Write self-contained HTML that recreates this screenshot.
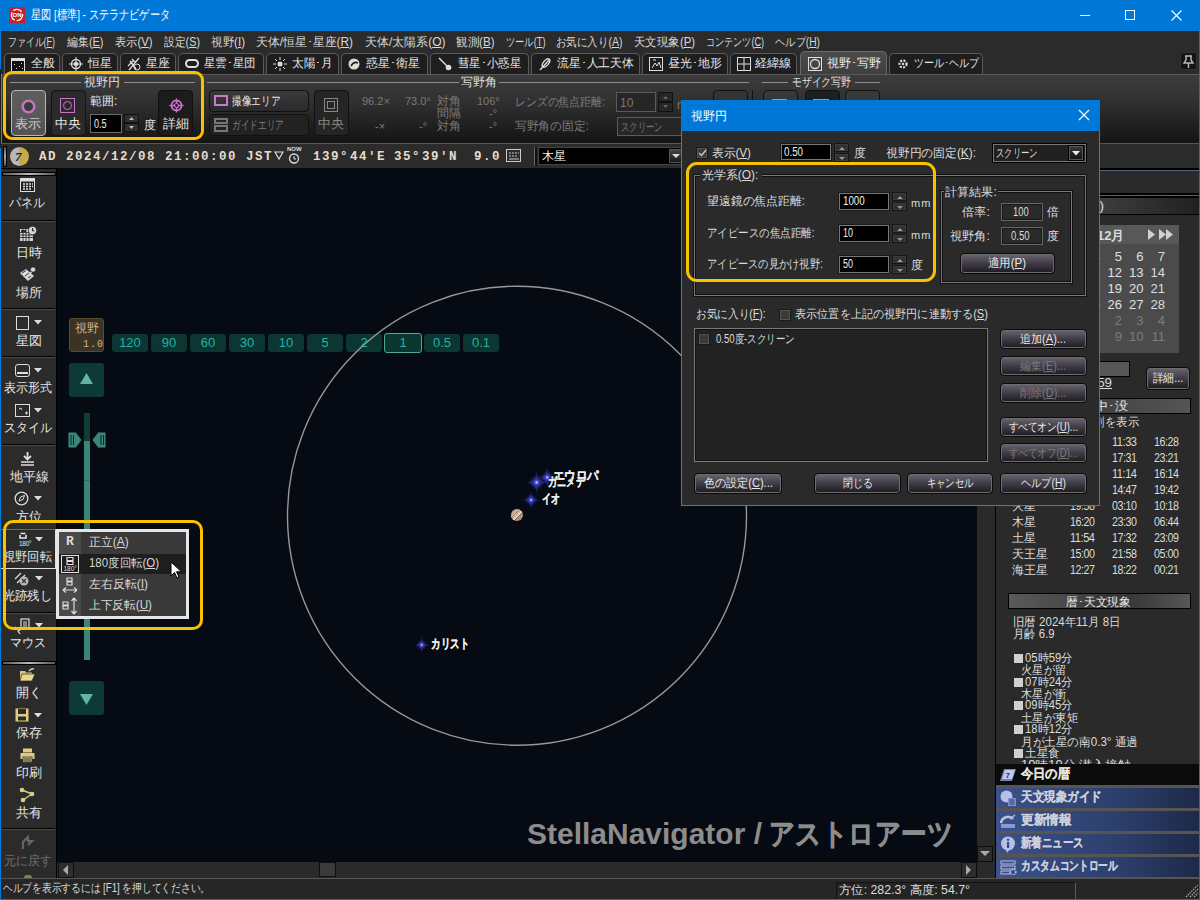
<!DOCTYPE html>
<html><head><meta charset="utf-8">
<style>
*{box-sizing:border-box;margin:0;padding:0}
html,body{width:1200px;height:900px;overflow:hidden;background:#2a2a2a;font-family:"Liberation Sans",sans-serif;font-size:12px;color:#d6d6d6}
.a{position:absolute}
.t{position:absolute;white-space:nowrap;line-height:1}
#title{left:0;top:0;width:1200px;height:31px;background:#0078d7}
#menu{left:1px;top:31px;width:1198px;height:22px;background:#2b2b2b}
#tabs{left:1px;top:53px;width:1198px;height:21px;background:#2b2b2b}
.tab{position:absolute;top:53px;height:21px;border:1px solid #5a5a5a;border-bottom:none;border-radius:5px 5px 0 0;background:#1e1e1e;color:#e0e0e0;font-size:12px;padding:4px 0 0 0}
#ribbon{left:1px;top:74px;width:1198px;height:70px;background:linear-gradient(#3c3c3c,#303030 40%,#141414);border-top:1px solid #5a5a5a;border-left:1px solid #777;border-bottom:1px solid #777;box-shadow:0 1px 0 #000}
#timebar{left:1px;top:143px;width:1198px;height:25px;background:#2b2b2b;border-top:1px solid #575757}
#side{left:1px;top:168px;width:56px;height:710px;background:#2b2b2b}
#map{left:57px;top:168px;width:920px;height:694px;background:#060a13}
#vscroll{left:977px;top:168px;width:17px;height:694px;background:#2a2a2a}
#hscroll{left:57px;top:862px;width:937px;height:16px;background:#2a2a2a}
#rpanel{left:995px;top:168px;width:204px;height:710px;background:#2a2a2a;border-left:1px solid #000}
#status{left:1px;top:878px;width:1198px;height:21px;background:#262626;border-top:1px solid #555}
#bl{left:0;top:0;width:1px;height:900px;background:#0078d7}
#br{left:1199px;top:0;width:1px;height:900px;background:#0078d7}
#bb{left:0;top:899px;width:1200px;height:1px;background:#0078d7}
.zb{position:absolute;top:334px;width:36px;height:18px;background:#0c3631;border-radius:3px;color:#23b3a3;font-size:13px;text-align:center;line-height:18px}
.dt{color:#dcdcdc;font-size:12px}
.cb{position:absolute;width:12px;height:12px;background:#3a3a3a;border:1px solid #1a1a1a;box-shadow:inset 0 0 0 1px #555}
.inp{position:absolute;background:#000;border:1px solid #1a1a1a;box-shadow:inset 0 0 0 1px #777}
.spin{position:absolute;width:15px;height:20px}
.spin i,.spin b{position:absolute;left:0;width:15px;height:9px;background:linear-gradient(#353535,#2a2a2a);border:1px solid #161616;box-shadow:inset 0 0 0 1px #3c3c3c}
.spin i{top:0}.spin b{top:10px}
.spin i::before{content:"";position:absolute;left:3.5px;top:2.5px;border-left:3.5px solid transparent;border-right:3.5px solid transparent;border-bottom:3px solid #9a9a9a}
.spin b::before{content:"";position:absolute;left:3.5px;top:2.5px;border-left:3.5px solid transparent;border-right:3.5px solid transparent;border-top:3px solid #9a9a9a}
.btn{position:absolute;display:flex;justify-content:center;background:linear-gradient(#6a6570,#403c46 50%,#1c1a20);border:1px solid #0a0a0a;box-shadow:inset 0 0 0 1px #6c6c6c;border-radius:4px;color:#e8e8e8;font-size:12px;text-align:center;line-height:19px;white-space:nowrap}
.btn.dis{color:#7a7a7a}
.btn span{display:inline-block;transform-origin:50% 0 !important}
</style></head><body>
<div class="a" id="title"></div>
<div class="a" id="menu"></div>
<div class="a" id="tabs"></div>
<div class="a" id="ribbon"></div>
<div class="a" id="timebar"></div>
<div class="a" id="side"></div><div class="a" style="left:56px;top:168px;width:1px;height:710px;background:#000"></div>
<div class="a" id="map"></div>
<div class="a" id="vscroll"></div>
<div class="a" id="hscroll"></div>
<div class="a" id="rpanel"></div>
<div class="a" id="status"></div>
<!-- TITLE -->
<div class="a" style="left:9px;top:7px;width:16px;height:16px;background:#c4202e"></div>
<svg class="a" style="left:9px;top:7px" width="16" height="16" viewBox="0 0 16 16"><circle cx="8" cy="8" r="5.6" fill="none" stroke="#fff" stroke-width="1.3" stroke-dasharray="9 2"/><text x="8" y="10.3" font-size="6" font-weight="bold" fill="#fff" text-anchor="middle" font-family="Liberation Sans">ON</text></svg>
<div class="t" style="left:31px;top:9px;color:#fff;font-size:12.5px;--w:139px;transform:scaleX(0.7830);transform-origin:0 0;">星図 [標準] - ステラナビゲータ</div>
<div class="a" style="left:1080px;top:15px;width:10px;height:1px;background:#fff"></div>
<div class="a" style="left:1125px;top:10px;width:10px;height:10px;border:1px solid #fff"></div>
<svg class="a" style="left:1171px;top:10px" width="11" height="11"><path d="M0.5 0.5L10.5 10.5M10.5 0.5L0.5 10.5" stroke="#fff" stroke-width="1.1"/></svg>
<!-- MENU -->
<div class="t" style="left:8px;top:36px;color:#d8d8d8;--w:47.0px;transform:scaleX(0.7420);transform-origin:0 0;">ファイル(<u>F</u>)</div>
<div class="t" style="left:66.5px;top:36px;color:#d8d8d8;--w:36.5px;transform:scaleX(0.9121);transform-origin:0 0;">編集(<u>E</u>)</div>
<div class="t" style="left:114.5px;top:36px;color:#d8d8d8;--w:37.5px;transform:scaleX(0.9371);transform-origin:0 0;">表示(<u>V</u>)</div>
<div class="t" style="left:164px;top:36px;color:#d8d8d8;--w:36.0px;transform:scaleX(0.8996);transform-origin:0 0;">設定(<u>S</u>)</div>
<div class="t" style="left:211px;top:36px;color:#d8d8d8;--w:34.0px;transform:scaleX(0.9620);transform-origin:0 0;">視野(<u>I</u>)</div>
<div class="t" style="left:256px;top:36px;color:#d8d8d8;--w:97.0px;transform:scaleX(0.9896);transform-origin:0 0;">天体/恒星･星座(<u>R</u>)</div>
<div class="t" style="left:364.5px;top:36px;color:#d8d8d8;--w:80.5px;transform:scaleX(0.9977);transform-origin:0 0;">天体/太陽系(<u>O</u>)</div>
<div class="t" style="left:456px;top:36px;color:#d8d8d8;--w:38.5px;transform:scaleX(0.9621);transform-origin:0 0;">観測(<u>B</u>)</div>
<div class="t" style="left:505.5px;top:36px;color:#d8d8d8;--w:39.5px;transform:scaleX(0.7693);transform-origin:0 0;">ツール(<u>T</u>)</div>
<div class="t" style="left:556px;top:36px;color:#d8d8d8;--w:66.5px;transform:scaleX(0.8748);transform-origin:0 0;">お気に入り(<u>A</u>)</div>
<div class="t" style="left:633.75px;top:36px;color:#d8d8d8;--w:61.2px;transform:scaleX(0.9560);transform-origin:0 0;">天文現象(<u>P</u>)</div>
<div class="t" style="left:706px;top:36px;color:#d8d8d8;--w:58.0px;transform:scaleX(0.7565);transform-origin:0 0;">コンテンツ(<u>C</u>)</div>
<div class="t" style="left:775px;top:36px;color:#d8d8d8;--w:45.0px;transform:scaleX(0.8543);transform-origin:0 0;">ヘルプ(<u>H</u>)</div>
<!-- TABS -->
<div class="tab" style="left:4px;width:56px"></div>
<div class="tab" style="left:62px;width:56px"></div>
<div class="tab" style="left:120px;width:56px"></div>
<div class="tab" style="left:178px;width:86px"></div>
<div class="tab" style="left:266px;width:73px"></div>
<div class="tab" style="left:341px;width:87px"></div>
<div class="tab" style="left:430px;width:99px"></div>
<div class="tab" style="left:531px;width:109px"></div>
<div class="tab" style="left:642px;width:86px"></div>
<div class="tab" style="left:730px;width:67px"></div>
<div class="tab" style="left:800px;width:87px;top:51px;height:23px;background:linear-gradient(#4c4c4c,#3e3e3e);border-color:#6a6a6a"></div>
<div class="tab" style="left:889px;width:94px"></div>

<svg class="a" style="left:11px;top:58px" width="14" height="14"><rect x="0.5" y="0.5" width="13" height="13" fill="#111" stroke="#ddd"/><rect x="0.5" y="0.5" width="13" height="2.5" fill="#ddd"/><rect x="3" y="6" width="1" height="1" fill="#ddd"/><rect x="8" y="8" width="1" height="1" fill="#ddd"/><rect x="5" y="10" width="1" height="1" fill="#ddd"/><rect x="10" y="5" width="1" height="1" fill="#ddd"/><rect x="11" y="10" width="1" height="1" fill="#ddd"/></svg>
<div class="t" style="left:31px;top:57px;color:#e6e6e6">全般</div>
<svg class="a" style="left:69px;top:57px" width="14" height="14"><circle cx="7" cy="7" r="4.5" fill="none" stroke="#ddd" stroke-width="1.3"/><path d="M7 0V14M0 7H14" stroke="#ddd"/><circle cx="7" cy="7" r="2.3" fill="#ddd"/></svg>
<div class="t" style="left:88px;top:57px;color:#e6e6e6">恒星</div>
<svg class="a" style="left:127px;top:57px" width="14" height="14"><path d="M2 13L12 1M3 4L9 12M1 9L6 4M5 2l3 3" stroke="#ddd" stroke-width="1.3" fill="none"/><circle cx="10" cy="10" r="3" fill="none" stroke="#ddd"/></svg>
<div class="t" style="left:146px;top:57px;color:#e6e6e6">星座</div>
<div class="a" style="left:185px;top:59px;width:14px;height:9px;border:2px solid #e0e0e0;border-radius:5px"></div>
<div class="t" style="left:204px;top:57px;color:#e6e6e6;--w:51.5px;transform:scaleX(0.9537);transform-origin:0 0;">星雲･星団</div>
<svg class="a" style="left:273px;top:57px" width="14" height="14"><circle cx="7" cy="7" r="2.5" fill="#ddd"/><path d="M7 0v3M7 11v3M0 7h3M11 7h3M2 2l2 2M10 10l2 2M12 2l-2 2M2 12l2-2" stroke="#ddd"/></svg>
<div class="t" style="left:292px;top:57px;color:#e6e6e6;--w:40.75px;transform:scaleX(0.9702);transform-origin:0 0;">太陽･月</div>
<svg class="a" style="left:348px;top:58px" width="12" height="12"><circle cx="6" cy="6" r="5.5" fill="#ddd"/><path d="M3 8Q6 3 10 5" stroke="#222" stroke-width="1.6" fill="none"/></svg>
<div class="t" style="left:366px;top:57px;color:#e6e6e6;--w:54px;transform:scaleX(1.0000);transform-origin:0 0;">惑星･衛星</div>
<svg class="a" style="left:438px;top:57px" width="14" height="14"><path d="M1 1L9 9" stroke="#ddd" stroke-width="1.4"/><circle cx="10.5" cy="10.5" r="2.8" fill="#ddd"/></svg>
<div class="t" style="left:458px;top:57px;color:#e6e6e6;--w:63px;transform:scaleX(0.9545);transform-origin:0 0;">彗星･小惑星</div>
<svg class="a" style="left:538px;top:57px" width="14" height="14"><path d="M2 13L12 2" stroke="#ddd" stroke-width="1.4"/><ellipse cx="8" cy="6" rx="2.5" ry="5" transform="rotate(40 8 6)" fill="none" stroke="#ddd" stroke-width="1.4"/></svg>
<div class="t" style="left:557px;top:57px;color:#e6e6e6;--w:77px;transform:scaleX(0.9872);transform-origin:0 0;">流星･人工天体</div>
<svg class="a" style="left:649px;top:57px" width="14" height="14"><rect x="0.5" y="0.5" width="13" height="13" fill="none" stroke="#ddd"/><path d="M3 11L6 6L8 9L10 5L12 11M4 3h3" stroke="#ddd" fill="none"/></svg>
<div class="t" style="left:668px;top:57px;color:#e6e6e6;--w:53.75px;transform:scaleX(0.9954);transform-origin:0 0;">昼光･地形</div>
<svg class="a" style="left:737px;top:57px" width="14" height="14"><rect x="0.5" y="0.5" width="13" height="13" fill="none" stroke="#ddd"/><path d="M7 0v14M0 7h14" stroke="#ddd"/></svg>
<div class="t" style="left:755px;top:57px;color:#e6e6e6;--w:36.75px;transform:scaleX(1.0208);transform-origin:0 0;">経緯線</div>
<svg class="a" style="left:808px;top:57px" width="14" height="14"><rect x="0.5" y="0.5" width="13" height="13" fill="none" stroke="#ddd"/><circle cx="7" cy="7" r="4.5" fill="none" stroke="#ddd" stroke-width="1.3"/></svg>
<div class="t" style="left:827px;top:57px;color:#eee;--w:54px;transform:scaleX(1.0000);transform-origin:0 0;">視野･写野</div>
<svg class="a" style="left:897px;top:58px" width="12" height="12"><circle cx="6" cy="6" r="3.5" fill="none" stroke="#ddd" stroke-width="2.2" stroke-dasharray="2 1.3"/><circle cx="6" cy="6" r="1.2" fill="#ddd"/></svg>
<div class="t" style="left:914px;top:57px;color:#e6e6e6;--w:65px;transform:scaleX(0.8333);transform-origin:0 0;">ツール･ヘルプ</div>
<div class="a" style="left:1180px;top:52px;width:17px;height:18px;background:#141414;border-radius:3px;border:1px solid #333"></div>
<svg class="a" style="left:1182px;top:55px" width="13" height="13"><path d="M3 1h7M4 1v4l-2 3h9l-2-3V1M6.5 8v5" stroke="#bbb" stroke-width="1.4" fill="none"/></svg>

<!-- RIBBON -->
<div class="a" style="left:10px;top:82px;width:71px;height:1px;background:#8a8e96"></div>
<div class="t" style="left:84px;top:76px;color:#e0e0e0">視野円</div>
<div class="a" style="left:124px;top:82px;width:71px;height:1px;background:#8a8e96"></div>
<div class="a" style="left:11px;top:90px;width:35px;height:46px;background:linear-gradient(#5e5e5e,#545454);border:1px solid #b8b8b8;border-radius:4px"></div>
<svg class="a" style="left:21px;top:99px" width="15" height="15"><circle cx="7.5" cy="7.5" r="5.8" fill="#3a3a3a" stroke="#c872c2" stroke-width="2.6"/></svg>
<div class="t" style="left:15px;top:118px;color:#cfcfcf;font-size:12.5px">表示</div>
<div class="a" style="left:51px;top:90px;width:35px;height:46px;background:#2a2a2a;border:1px solid #141414;border-radius:4px"></div>
<div class="a" style="left:60px;top:98px;width:15px;height:15px;border:1.3px solid #c877c6"></div>
<div class="a" style="left:63px;top:101px;width:9px;height:9px;border:1.2px solid #c877c6;border-radius:50%"></div>
<div class="t" style="left:55px;top:118px;color:#e8e8e8;font-size:12.5px">中央</div>
<div class="t" style="left:90px;top:95px;color:#e8e8e8">範囲:</div>
<div class="a" style="left:90px;top:114px;width:32px;height:19px;background:#000;border:1px solid #6a6a6a"></div>
<div class="t" style="left:94px;top:118px;color:#eee;font-size:12px;--w:12.6px;transform:scaleX(0.7551);transform-origin:0 0;">0.5</div>
<div class="a" style="left:124px;top:114px;width:15px;height:9px;background:#2f2f2f;border:1px solid #111"></div>
<div class="a" style="left:124px;top:123px;width:15px;height:9px;background:#2f2f2f;border:1px solid #111"></div>
<svg class="a" style="left:124px;top:114px" width="15" height="18"><path d="M5 6h5l-2.5-3z M5 12h5l-2.5 3z" fill="#bbb"/></svg>
<div class="t" style="left:144px;top:119px;color:#e8e8e8">度</div>
<div class="a" style="left:158px;top:90px;width:35px;height:46px;background:#1c1c1c;border:1px solid #111;border-radius:4px"></div>
<svg class="a" style="left:169px;top:98px" width="15" height="15"><circle cx="7.5" cy="7.5" r="5" fill="none" stroke="#c872c2" stroke-width="1.8"/><path d="M7.5 0.5v14M0.5 7.5h14" stroke="#c872c2" stroke-width="1.4"/><circle cx="7.5" cy="7.5" r="2" fill="#1c1c1c" stroke="#c872c2" stroke-width="1.2"/></svg>
<div class="t" style="left:163px;top:118px;color:#e8e8e8;font-size:12.5px">詳細</div>
<!-- yellow highlight -->
<div class="a" style="left:3px;top:71px;width:201px;height:69px;border:3px solid #f7c300;border-radius:9px"></div>

<!-- 写野角 group -->
<div class="a" style="left:207px;top:82px;width:252px;height:1px;background:#8a8e96"></div>
<div class="t" style="left:461px;top:76px;color:#e0e0e0">写野角</div>
<div class="a" style="left:499px;top:82px;width:250px;height:1px;background:#8a8e96"></div>
<div class="a" style="left:209px;top:90px;width:100px;height:22px;background:linear-gradient(#3a3a3a,#2a2a2a);border:1px solid #101010;border-radius:4px"></div>
<div class="a" style="left:214px;top:95px;width:14px;height:11px;border:2px solid #c97ac6"></div>
<div class="t" style="left:232px;top:95px;color:#e8e8e8;--w:48.5px;transform:scaleX(0.8083);transform-origin:0 0;">撮像エリア</div>
<div class="a" style="left:209px;top:114px;width:100px;height:22px;background:#222;border:1px solid #101010;border-radius:4px"></div>
<div class="a" style="left:214px;top:118px;width:14px;height:6px;border:2px solid #777"></div>
<div class="a" style="left:214px;top:125px;width:14px;height:7px;border:2px solid #777"></div>
<div class="t" style="left:232px;top:119px;color:#7c7c7c;--w:51.75px;transform:scaleX(0.7188);transform-origin:0 0;">ガイドエリア</div>
<div class="a" style="left:314px;top:90px;width:35px;height:46px;background:#252525;border:1px solid #111;border-radius:4px"></div>
<div class="a" style="left:324px;top:98px;width:14px;height:14px;border:1.5px solid #888"></div>
<div class="a" style="left:327px;top:101px;width:8px;height:8px;border:1.5px solid #888"></div>
<div class="t" style="left:318px;top:118px;color:#888;font-size:12.5px">中央</div>
<div class="t" style="left:362px;top:96px;color:#7a7a7a;font-size:11px">96.2×</div>
<div class="t" style="left:405px;top:96px;color:#7a7a7a;font-size:11px">73.0°</div>
<div class="t" style="left:437px;top:95px;color:#7a7a7a">対角</div>
<div class="t" style="left:477px;top:96px;color:#7a7a7a;font-size:11px">106°</div>
<div class="t" style="left:437px;top:107px;color:#7a7a7a">間隔</div>
<div class="t" style="left:489px;top:108px;color:#7a7a7a;font-size:11px">-°</div>
<div class="t" style="left:375px;top:121px;color:#7a7a7a;font-size:11px">-×</div>
<div class="t" style="left:419px;top:121px;color:#7a7a7a;font-size:11px">-°</div>
<div class="t" style="left:437px;top:120px;color:#7a7a7a">対角</div>
<div class="t" style="left:489px;top:121px;color:#7a7a7a;font-size:11px">-°</div>
<div class="t" style="left:515px;top:96px;color:#7c7c7c;--w:90px;transform:scaleX(0.9059);transform-origin:0 0;">レンズの焦点距離:</div>
<div class="a" style="left:616px;top:92px;width:40px;height:20px;background:#262626;border:1px solid #5a5a5a"></div>
<div class="t" style="left:620px;top:97px;color:#777;font-size:12px">10</div>
<div class="a" style="left:658px;top:92px;width:15px;height:10px;background:#262626;border:1px solid #111"></div>
<div class="a" style="left:658px;top:102px;width:15px;height:10px;background:#262626;border:1px solid #111"></div>
<svg class="a" style="left:658px;top:92px" width="15" height="20"><path d="M5 7h5l-2.5-3z M5 13h5l-2.5 3z" fill="#666"/></svg>
<div class="t" style="left:677px;top:99px;color:#777">m</div>
<div class="t" style="left:515px;top:120px;color:#7c7c7c;--w:73.75px;transform:scaleX(0.9788);transform-origin:0 0;">写野角の固定:</div>
<div class="a" style="left:617px;top:117px;width:80px;height:19px;background:#262626;border:1px solid #5a5a5a"></div>
<div class="t" style="left:621px;top:121px;color:#777;--w:41.5px;transform:scaleX(0.6917);transform-origin:0 0;">スクリーン</div>
<!-- behind dialog buttons -->
<div class="a" style="left:713px;top:90px;width:35px;height:46px;background:#333;border:1px solid #111;border-radius:4px"></div>
<div class="a" style="left:752px;top:90px;width:1px;height:46px;background:#111"></div>
<div class="a" style="left:762px;top:82px;width:26px;height:1px;background:#8a8e96"></div>
<div class="t" style="left:792px;top:76px;color:#e0e0e0;--w:59px;transform:scaleX(0.8194);transform-origin:0 0;">モザイク写野</div>
<div class="a" style="left:855px;top:82px;width:25px;height:1px;background:#8a8e96"></div>
<div class="a" style="left:763px;top:90px;width:35px;height:46px;background:#383838;border:1px solid #111;border-radius:4px"></div>
<div class="a" style="left:772px;top:99px;width:15px;height:2px;background:#c87ac6"></div>
<div class="a" style="left:805px;top:90px;width:35px;height:46px;background:#1f1f1f;border:1px solid #111;border-radius:4px"></div>
<div class="a" style="left:813px;top:99px;width:16px;height:10px;border:1px solid #999"></div>
<div class="a" style="left:845px;top:90px;width:35px;height:46px;background:#383838;border:1px solid #111;border-radius:4px"></div>

<!-- TIMEBAR -->
<div class="a" style="left:3px;top:146px;width:4px;height:21px;background:#000"></div><div class="a" style="left:4px;top:147px;width:2px;height:19px;background:linear-gradient(#555,#aaa 50%,#555)"></div>
<div class="a" style="left:10px;top:147px;width:19px;height:19px;border-radius:50%;background:linear-gradient(90deg,#b8b8b8 50%,#c8a94a 50%)"></div>
<div class="t" style="left:15px;top:150px;color:#222;font-weight:bold;font-size:13px;font-family:'Liberation Serif',serif;font-style:italic">7</div>
<div class="t" style="left:39px;top:151px;color:#e6dccb;font-family:'Liberation Mono',monospace;font-weight:bold;font-size:12.5px;letter-spacing:1.5px">AD 2024/12/08 21:00:00 JST</div>
<svg class="a" style="left:274px;top:151px" width="10" height="9"><path d="M1 1h8L5 8z" fill="none" stroke="#ddd" stroke-width="1.2"/></svg>
<div class="t" style="left:287px;top:146px;color:#ddd;font-size:6px;font-weight:bold">NOW</div>
<svg class="a" style="left:288px;top:152px" width="12" height="12"><circle cx="6" cy="6.5" r="4.5" fill="none" stroke="#ddd" stroke-width="1.3"/><path d="M6 4v3h2" stroke="#ddd" fill="none"/></svg>
<div class="t" style="left:313px;top:151px;color:#e6dccb;font-family:'Liberation Mono',monospace;font-weight:bold;font-size:12.5px;letter-spacing:1.5px">139°</div>
<div class="t" style="left:350px;top:151px;color:#e6dccb;font-family:'Liberation Mono',monospace;font-weight:bold;font-size:12.5px;letter-spacing:1.5px">44'E</div>
<div class="t" style="left:394px;top:151px;color:#e6dccb;font-family:'Liberation Mono',monospace;font-weight:bold;font-size:12.5px;letter-spacing:1.5px">35°</div>
<div class="t" style="left:422px;top:151px;color:#e6dccb;font-family:'Liberation Mono',monospace;font-weight:bold;font-size:12.5px;letter-spacing:1.5px">39'N</div>
<div class="t" style="left:474px;top:151px;color:#e6dccb;font-family:'Liberation Mono',monospace;font-weight:bold;font-size:12.5px;letter-spacing:1.5px">9.0</div>
<svg class="a" style="left:506px;top:149px" width="15" height="13"><rect x="0.5" y="0.5" width="14" height="12" fill="none" stroke="#ccc"/><path d="M3 4h2M6 4h2M9 4h2M12 4h1M3 7h2M6 7h2M9 7h2M3 10h10" stroke="#ccc"/></svg>
<div class="a" style="left:534px;top:147px;width:3px;height:19px;background:#111;border-left:1px solid #666"></div>
<div class="a" style="left:538px;top:147px;width:147px;height:18px;background:#000;border:1px solid #444"></div>
<div class="t" style="left:542px;top:150px;color:#eee">木星</div>
<div class="a" style="left:669px;top:149px;width:14px;height:14px;background:linear-gradient(#444,#1a1a1a);border:1px solid #555"></div>
<svg class="a" style="left:671px;top:153px" width="10" height="6"><path d="M1 1h8L5 5z" fill="#ddd"/></svg>

<!-- SIDEBAR -->
<div class="a" style="left:1px;top:168px;width:56px;height:1px;background:#000"></div><div class="a" style="left:2px;top:172px;width:54px;height:4px;background:#000"></div><div class="a" style="left:3px;top:173px;width:52px;height:2px;background:linear-gradient(90deg,#555,#bbb 50%,#555)"></div>
<svg class="a" style="left:20px;top:178px" width="15" height="14"><rect x="0.5" y="0.5" width="14" height="13" fill="#222" stroke="#ddd"/><rect x="0.5" y="0.5" width="14" height="3" fill="#ddd"/><path d="M3 6h2M6 6h2M9 6h2M12 6h1M3 8.5h2M6 8.5h2M9 8.5h2M12 8.5h1M3 11h2M6 11h2M9 11h2" stroke="#ddd" stroke-width="1.5"/></svg>
<div class="t" style="left:9px;top:197px;color:#e6e6e6;font-size:12.5px;--w:36px;transform:scaleX(0.9231);transform-origin:0 0;">パネル</div>
<div class="a" style="left:2px;top:220px;width:53px;height:1px;background:#000"></div><div class="a" style="left:2px;top:221px;width:53px;height:1px;background:#4a4a4a"></div>
<svg class="a" style="left:20px;top:226px" width="17" height="16"><rect x="0" y="3" width="13" height="12" fill="#d8d8d8"/><path d="M0 6.5h13M0 9h13M0 11.5h13M3 3v12M6 3v12M9 3v12" stroke="#2b2b2b" stroke-width=".9"/><rect x="1" y="4" width="5" height="2" fill="#2b2b2b"/><circle cx="12.5" cy="4.5" r="4.2" fill="#d8d8d8" stroke="#2b2b2b" stroke-width=".8"/><path d="M12.5 2v2.7h2" stroke="#2b2b2b" stroke-width="1.1" fill="none"/></svg>
<div class="t" style="left:16px;top:247px;color:#e6e6e6;font-size:12.5px">日時</div>
<svg class="a" style="left:19px;top:266px" width="18" height="16"><path d="M1 7l6-4 8 7-6 5z" fill="#d8d8d8"/><path d="M3 7l4-2.5M6 10l4-3M9 12l3-2" stroke="#2b2b2b" stroke-width=".9"/><path d="M10 9l3-4" stroke="#d8d8d8" stroke-width="1.4"/><circle cx="14" cy="3.5" r="2.6" fill="#d8d8d8" stroke="#2b2b2b" stroke-width=".7"/></svg>
<div class="t" style="left:16px;top:287px;color:#e6e6e6;font-size:12.5px">場所</div>
<div class="a" style="left:2px;top:308px;width:53px;height:1px;background:#000"></div><div class="a" style="left:2px;top:309px;width:53px;height:1px;background:#4a4a4a"></div>
<div class="a" style="left:16px;top:316px;width:13px;height:14px;border:1px solid #ddd"></div>
<svg class="a" style="left:34px;top:320px" width="8" height="5"><path d="M0 0h8L4 4.5z" fill="#ddd"/></svg>
<div class="t" style="left:16px;top:335px;color:#e6e6e6;font-size:12.5px">星図</div>
<div class="a" style="left:2px;top:356px;width:53px;height:1px;background:#000"></div><div class="a" style="left:2px;top:357px;width:53px;height:1px;background:#4a4a4a"></div>
<div class="a" style="left:15px;top:364px;width:15px;height:13px;border:1.3px solid #ddd;border-radius:3px"></div>
<div class="a" style="left:17px;top:372px;width:11px;height:2px;background:#ddd"></div>
<svg class="a" style="left:34px;top:368px" width="8" height="5"><path d="M0 0h8L4 4.5z" fill="#ddd"/></svg>
<div class="t" style="left:4px;top:382px;color:#e6e6e6;font-size:12.5px;--w:48px;transform:scaleX(0.9231);transform-origin:0 0;">表示形式</div>
<div class="a" style="left:15px;top:404px;width:15px;height:13px;border:1px solid #ddd"></div>
<svg class="a" style="left:17px;top:406px" width="12" height="10"><path d="M2 3l2-1M4 2l.5 2M8 7h3M9.5 5.5v3" stroke="#ddd"/></svg>
<svg class="a" style="left:34px;top:408px" width="8" height="5"><path d="M0 0h8L4 4.5z" fill="#ddd"/></svg>
<div class="t" style="left:4px;top:422px;color:#e6e6e6;font-size:12.5px;--w:48px;transform:scaleX(0.9231);transform-origin:0 0;">スタイル</div>
<div class="a" style="left:2px;top:444px;width:53px;height:1px;background:#000"></div><div class="a" style="left:2px;top:445px;width:53px;height:1px;background:#4a4a4a"></div>
<svg class="a" style="left:20px;top:451px" width="15" height="15"><path d="M7.5 1v7M4 5l3.5 3.5L11 5" stroke="#ddd" stroke-width="1.8" fill="none"/><path d="M1 11h13M1 14h13" stroke="#ddd" stroke-width="1.4"/></svg>
<div class="t" style="left:10px;top:471px;color:#e6e6e6;font-size:12.5px">地平線</div>
<svg class="a" style="left:14px;top:491px" width="15" height="15"><circle cx="7.5" cy="7.5" r="6.3" fill="none" stroke="#ddd" stroke-width="1.3"/><path d="M5 10l1.5-4 4-1.5-1.5 4z" fill="none" stroke="#ddd"/></svg>
<svg class="a" style="left:34px;top:496px" width="8" height="5"><path d="M0 0h8L4 4.5z" fill="#ddd"/></svg>
<div class="t" style="left:16px;top:511px;color:#e6e6e6;font-size:12.5px">方位</div>
<!-- highlighted 視野回転 -->
<div class="a" style="left:1px;top:529px;width:55px;height:40px;background:#2b2b2b;border-top:1px solid #6a6a6a;border-bottom:1px solid #e0e0e0;border-right:1px solid #e0e0e0"></div>
<svg class="a" style="left:18px;top:532px" width="14" height="16"><path d="M2.5 1.5h5M2 3v3h6V3" fill="none" stroke="#e6e6e6" stroke-width="1.6"/><text x="1" y="14" font-size="6.5" fill="#e6e6e6" font-family="Liberation Sans" letter-spacing="-.3">180°</text></svg>
<svg class="a" style="left:35px;top:537px" width="8" height="5"><path d="M0 0h8L4 4.5z" fill="#ddd"/></svg>
<div class="t" style="left:3px;top:551px;color:#e6e6e6;font-size:12.5px;--w:49px;transform:scaleX(0.9423);transform-origin:0 0;">視野回転</div>
<svg class="a" style="left:14px;top:571px" width="16" height="16"><path d="M1 8l6-6M3 12l8-8" stroke="#ddd" stroke-width="1.2"/><circle cx="10" cy="10" r="4.5" fill="#bbb"/><path d="M8 8l4 4M12 8l-4 4" stroke="#333" stroke-width="1.2"/></svg>
<svg class="a" style="left:35px;top:576px" width="8" height="5"><path d="M0 0h8L4 4.5z" fill="#ddd"/></svg>
<div class="t" style="left:3px;top:590px;color:#e6e6e6;font-size:12.5px;--w:49px;transform:scaleX(0.9423);transform-origin:0 0;">光跡残し</div>
<div class="a" style="left:2px;top:612px;width:53px;height:1px;background:#000"></div><div class="a" style="left:2px;top:613px;width:53px;height:1px;background:#4a4a4a"></div>
<svg class="a" style="left:14px;top:618px" width="16" height="16"><rect x="7" y="1" width="8" height="10" fill="none" stroke="#ddd" stroke-width="1.2"/><path d="M9 4h4M9 6h4M9 8h4" stroke="#ddd"/><path d="M1 9l5 3-2 1 2 3" stroke="#ddd" stroke-width="1.3" fill="none"/></svg>
<svg class="a" style="left:35px;top:623px" width="8" height="5"><path d="M0 0h8L4 4.5z" fill="#ddd"/></svg>
<div class="t" style="left:10px;top:637px;color:#e6e6e6;font-size:12.5px;--w:36px;transform:scaleX(0.9231);transform-origin:0 0;">マウス</div>
<div class="a" style="left:2px;top:661px;width:54px;height:4px;background:#000"></div><div class="a" style="left:3px;top:662px;width:52px;height:2px;background:linear-gradient(90deg,#555,#bbb 50%,#555)"></div>
<svg class="a" style="left:19px;top:667px" width="17" height="15"><path d="M1 4h5l1 1.5h6v8.5H1z" fill="#d8c47a"/><path d="M3 7h13l-3 7H1z" fill="#e8d68c" stroke="#2b2b2b" stroke-width=".7"/><path d="M10 4q3-3 5-2" stroke="#e8d68c" stroke-width="1.3" fill="none"/></svg>
<div class="t" style="left:16px;top:687px;color:#e6e6e6;font-size:12.5px">開く</div>
<svg class="a" style="left:15px;top:708px" width="14" height="14"><rect x="0.5" y="0.5" width="13" height="13" fill="#e0cc80"/><rect x="3" y="1" width="8" height="5" fill="#2b2b2b"/><rect x="3" y="8.5" width="8" height="4" fill="#2b2b2b"/></svg>
<svg class="a" style="left:34px;top:713px" width="8" height="5"><path d="M0 0h8L4 4.5z" fill="#ddd"/></svg>
<div class="t" style="left:16px;top:727px;color:#e6e6e6;font-size:12.5px">保存</div>
<svg class="a" style="left:20px;top:748px" width="15" height="15"><rect x="3" y="0.5" width="9" height="4" fill="#e0cc80"/><rect x="0.5" y="5" width="14" height="6" fill="#e0cc80"/><rect x="3" y="9" width="9" height="5.5" fill="#e0cc80" stroke="#2b2b2b" stroke-width=".8"/><path d="M4 11h7M4 13h7" stroke="#2b2b2b"/></svg>
<div class="t" style="left:16px;top:767px;color:#e6e6e6;font-size:12.5px">印刷</div>
<svg class="a" style="left:19px;top:787px" width="16" height="16"><path d="M3 3l10 4L4 13" stroke="#e0cc80" stroke-width="1.4" fill="none"/><circle cx="3" cy="3" r="2.3" fill="#e0cc80"/><circle cx="13" cy="7" r="2.3" fill="#e0cc80"/><circle cx="4" cy="13" r="2.3" fill="#e0cc80"/></svg>
<div class="t" style="left:16px;top:807px;color:#e6e6e6;font-size:12.5px">共有</div>
<div class="a" style="left:2px;top:828px;width:53px;height:1px;background:#000"></div><div class="a" style="left:2px;top:829px;width:53px;height:1px;background:#4a4a4a"></div>
<svg class="a" style="left:20px;top:835px" width="15" height="15"><path d="M3 14V7l5-5v4h4l-4 4" stroke="#666" stroke-width="2.2" fill="none"/></svg>
<div class="t" style="left:4px;top:855px;color:#6e6e6e;font-size:12.5px;--w:48px;transform:scaleX(0.9231);transform-origin:0 0;">元に戻す</div>
<div class="a" style="left:24px;top:875px;width:8px;height:3px;background:#8a7f55;border-radius:4px 4px 0 0"></div>

<!-- zoom controls -->
<div class="a" style="left:69px;top:318px;width:35px;height:34px;background:#3b3426;border:1px solid #5a4a32;border-radius:3px"></div>
<div class="t" style="left:75px;top:322px;color:#cfb08e;font-size:12px">視野</div>
<div class="t" style="left:83px;top:340px;color:#cfb08e;font-size:10px;font-family:'Liberation Mono',monospace;letter-spacing:1px">1.0</div>
<div class="zb" style="left:112px">120</div>
<div class="zb" style="left:151px">90</div>
<div class="zb" style="left:190px">60</div>
<div class="zb" style="left:229px">30</div>
<div class="zb" style="left:268px">10</div>
<div class="zb" style="left:307px">5</div>
<div class="zb" style="left:346px">2</div>
<div class="zb" style="left:384px;top:333px;width:38px;height:20px;line-height:18px;border:1px solid #4aa89a;background:#0a3630">1</div>
<div class="zb" style="left:424px">0.5</div>
<div class="zb" style="left:463px">0.1</div>
<!-- MAP CONTENT -->
<svg class="a" style="left:57px;top:168px" width="920" height="694" viewBox="57 168 920 694">
<defs>
<radialGradient id="glow"><stop offset="0" stop-color="#e8ecff"/><stop offset="0.15" stop-color="#9aa4ff"/><stop offset="0.45" stop-color="#4048d0" stop-opacity=".75"/><stop offset="1" stop-color="#2020a0" stop-opacity="0"/></radialGradient><radialGradient id="glow2"><stop offset="0" stop-color="#5058e0" stop-opacity=".6"/><stop offset="1" stop-color="#2020a0" stop-opacity="0"/></radialGradient><path id="spk" d="M0 -1 Q0.8 -0.8 1 0 Q0.8 0.8 0 1 Q-0.8 0.8 -1 0 Q-0.8 -0.8 0 -1Z"/>
<linearGradient id="jup" x1="0" y1="0" x2="1" y2="1"><stop offset="0" stop-color="#c8b8a0"/><stop offset="1" stop-color="#a08868"/></linearGradient>
</defs>
<circle cx="517" cy="515.7" r="229.5" fill="none" stroke="#979797" stroke-width="1.4"/>
<circle cx="517" cy="515" r="6" fill="url(#jup)"/>
<clipPath id="jc"><circle cx="517" cy="515.3" r="6"/></clipPath><g clip-path="url(#jc)"><path d="M510 519L520 509M512 521L522 511" stroke="#e0e4e0" stroke-width="1.6"/><path d="M511 518L519 510M514 521L522 513" stroke="#8a5a40" stroke-width=".9"/></g>
<circle cx="536.6" cy="482.4" r="8.25" fill="url(#glow2)"/><path d="M536.6 471.4 Q537.26 481.74 547.6 482.4 Q537.26 483.06 536.6 493.4 Q535.94 483.06 525.6 482.4 Q535.94 481.74 536.6 471.4Z" fill="#3a40c0" opacity=".45"/><circle cx="536.6" cy="482.4" r="4.95" fill="url(#glow)"/><circle cx="547.2" cy="477.4" r="7.50" fill="url(#glow2)"/><path d="M547.2 467.4 Q547.80 476.80 557.2 477.4 Q547.80 478.00 547.2 487.4 Q546.60 478.00 537.2 477.4 Q546.60 476.80 547.2 467.4Z" fill="#3a40c0" opacity=".45"/><circle cx="547.2" cy="477.4" r="4.50" fill="url(#glow)"/><circle cx="531" cy="500" r="6.75" fill="url(#glow2)"/><path d="M531 491 Q531.54 499.46 540 500 Q531.54 500.54 531 509 Q530.46 500.54 522 500 Q530.46 499.46 531 491Z" fill="#3a40c0" opacity=".45"/><circle cx="531" cy="500" r="4.05" fill="url(#glow)"/><circle cx="421.7" cy="644.9" r="6.00" fill="url(#glow2)"/><path d="M421.7 636.9 Q422.18 644.42 429.7 644.9 Q422.18 645.38 421.7 652.9 Q421.22 645.38 413.7 644.9 Q421.22 644.42 421.7 636.9Z" fill="#3a40c0" opacity=".45"/><circle cx="421.7" cy="644.9" r="3.60" fill="url(#glow)"/>
</svg>
<div class="t" style="left:431px;top:638px;color:#f0f0f0;font-weight:bold;-webkit-text-stroke:0.2px currentColor;font-size:12.5px;text-shadow:0 0 2px #000;--w:38px;transform:scaleX(0.7308);transform-origin:0 0;">カリスト</div>
<div class="t" style="left:542px;top:493px;color:#f0f0f0;font-weight:bold;-webkit-text-stroke:0.2px currentColor;font-size:12.5px;text-shadow:0 0 2px #000;--w:18px;transform:scaleX(0.6923);transform-origin:0 0;">イオ</div>

<div class="t" style="left:553px;top:470px;color:#f0f0f0;font-weight:bold;-webkit-text-stroke:0.2px currentColor;font-size:12.5px;text-shadow:0 0 2px #000;--w:46px;transform:scaleX(0.8846);transform-origin:0 0;">エウロパ</div>
<div class="t" style="left:548px;top:476px;color:#f0f0f0;font-weight:bold;-webkit-text-stroke:0.2px currentColor;font-size:12.5px;text-shadow:0 0 2px #000;--w:37px;transform:scaleX(0.7115);transform-origin:0 0;">ガニメデ</div>
<div class="t" style="left:527px;top:819px;color:#8c8c8c;font-weight:bold;font-size:30px;--w:235px;transform:scaleX(0.9997);transform-origin:0 0;">StellaNavigator /</div>
<div class="t" style="left:769px;top:819px;color:#8c8c8c;font-weight:bold;font-size:30px;-webkit-text-stroke:0.6px #8c8c8c;--w:184px;transform:scaleX(0.8519);transform-origin:0 0;">アストロアーツ</div>
<div class="a" style="left:69px;top:363px;width:35px;height:34px;background:#0d3a34;border-radius:3px"></div>
<svg class="a" style="left:80px;top:373px" width="14" height="12"><path d="M0 11h13L6.5 0z" fill="#62b3a8"/></svg>
<div class="a" style="left:84px;top:413px;width:6px;height:28px;background:#0e3d36"></div>
<div class="a" style="left:84px;top:441px;width:6px;height:219px;background:#3a8478"></div>
<div class="a" style="left:84px;top:480px;width:6px;height:1px;background:#2e6e64"></div>
<svg class="a" style="left:68px;top:431px" width="39" height="18"><path d="M0 1h8l6 8-6 8H0z" fill="#3a8478" stroke="#000" stroke-width=".8"/><path d="M38 1h-8l-6 8 6 8h8z" fill="#3a8478" stroke="#000" stroke-width=".8"/><path d="M3 4v10M5.5 4v10M33 4v10M35.5 4v10" stroke="#0a2a26" stroke-width="1"/></svg>
<div class="a" style="left:69px;top:681px;width:35px;height:34px;background:#0d3a34;border-radius:3px"></div>
<svg class="a" style="left:80px;top:693px" width="14" height="12"><path d="M0 1h13L6.5 12z" fill="#62b3a8"/></svg>
<!-- scrollbars -->
<div class="a" style="left:977px;top:846px;width:16px;height:16px;background:#2d2d2d;border:1px solid #0e0e0e"></div>
<svg class="a" style="left:980px;top:851px" width="10" height="6"><path d="M0 0h10L5 5z" fill="#aaa"/></svg>
<div class="a" style="left:58px;top:862px;width:16px;height:16px;background:#2d2d2d;border:1px solid #0e0e0e"></div>
<svg class="a" style="left:63px;top:865px" width="6" height="10"><path d="M5 0v10L0 5z" fill="#aaa"/></svg>
<div class="a" style="left:319px;top:862px;width:17px;height:15px;background:#3a3a3a;border:1px solid #0e0e0e"></div>
<div class="a" style="left:961px;top:862px;width:16px;height:16px;background:#2d2d2d;border:1px solid #0e0e0e"></div>
<svg class="a" style="left:966px;top:865px" width="6" height="10"><path d="M0 0v10L5 5z" fill="#aaa"/></svg>

<!-- POPUP MENU -->
<div class="a" style="left:56px;top:529px;width:133px;height:90px;background:#e6e6e6"></div>
<div class="a" style="left:59px;top:532px;width:127px;height:84px;background:#393939"></div>
<div class="a" style="left:59px;top:532px;width:22px;height:84px;background:#4a4a4a"></div>
<div class="a" style="left:59px;top:554px;width:127px;height:20px;background:#1e1e1e"></div>
<div class="a" style="left:61px;top:555px;width:18px;height:18px;border:1px solid #e0e0e0;background:#1e1e1e"></div>
<div class="t" style="left:66px;top:535px;color:#ddd;font-weight:bold;font-size:13px;font-family:'Liberation Mono',monospace">R</div>
<svg class="a" style="left:61px;top:555px" width="18" height="18"><path d="M6 2.5h6v3h-6zM6 6.5h6v3h-6z" fill="none" stroke="#ddd" stroke-width="1.2"/><text x="2.5" y="16" font-size="6.5" fill="#ddd" font-family="Liberation Sans">180°</text></svg>
<svg class="a" style="left:61px;top:577px" width="18" height="18"><path d="M6 1h5v3h-5zM6 5h5v3h-5z" fill="none" stroke="#ddd" stroke-width="1.2"/><path d="M2 13h14M2 13l3-2.5M2 13l3 2.5M16 13l-3-2.5M16 13l-3 2.5" stroke="#ddd" stroke-width="1.2" fill="none"/></svg>
<svg class="a" style="left:61px;top:597px" width="18" height="18"><path d="M2 5h5v3h-5zM2 9h5v3h-5z" fill="none" stroke="#ddd" stroke-width="1.2"/><path d="M13 1v16M13 1l-2.5 3M13 1l2.5 3M13 17l-2.5-3M13 17l2.5-3" stroke="#ddd" stroke-width="1.2" fill="none"/></svg>
<div class="t" style="left:89px;top:536px;color:#d8d8d8;font-size:12px;--w:39.6px;transform:scaleX(0.9896);transform-origin:0 0;">正立(<u>A</u>)</div>
<div class="t" style="left:89px;top:557px;color:#d8d8d8;font-size:12px;--w:70px;transform:scaleX(0.9540);transform-origin:0 0;">180度回転(<u>O</u>)</div>
<div class="t" style="left:89px;top:578px;color:#d8d8d8;font-size:12px;--w:59px;transform:scaleX(0.9942);transform-origin:0 0;">左右反転(<u>I</u>)</div>
<div class="t" style="left:89px;top:599px;color:#d8d8d8;font-size:12px;--w:63px;transform:scaleX(0.9741);transform-origin:0 0;">上下反転(<u>U</u>)</div>
<svg class="a" style="left:170px;top:561px" width="13" height="18"><path d="M1 1v14l3.5-3.5 2.5 5.5 2-1-2.5-5.2h5z" fill="#fff" stroke="#000" stroke-width="1"/></svg>
<div class="a" style="left:3px;top:520px;width:200px;height:110px;border:3px solid #f7c300;border-radius:10px"></div>

<!-- RIGHT PANEL -->
<div class="a" style="left:995px;top:168px;width:204px;height:3px;background:#000"></div>
<div class="a" style="left:995px;top:170px;width:204px;height:1px;background:#56657a"></div>
<div class="a" style="left:995px;top:193px;width:204px;height:2px;background:#000"></div>
<div class="a" style="left:995px;top:195px;width:204px;height:1px;background:#56657a"></div>
<div class="a" style="left:995px;top:196px;width:204px;height:2px;background:#000"></div>
<div class="a" style="left:1000px;top:198px;width:199px;height:16px;background:linear-gradient(90deg,#2a2a2a,#4a4a4a 30%,#202020)"></div>
<div class="a" style="left:995px;top:214px;width:204px;height:1px;background:#000"></div>
<div class="t" style="left:1068px;top:200px;color:#e0e0e0;--w:36px;transform:scaleX(1.1250);transform-origin:0 0;">(東京)</div>
<!-- calendar -->
<div class="a" style="left:1029px;top:225px;width:150px;height:19px;background:#585858"></div>
<div class="a" style="left:1029px;top:244px;width:150px;height:109px;background:#4b4b4b"></div>
<div class="t" style="left:1040px;top:228px;color:#dcdcdc;font-weight:bold">◀◀ ◀</div>
<div class="t" style="left:1097px;top:229px;color:#dcdcdc;font-weight:bold;font-size:13px">12月</div>
<svg class="a" style="left:1148px;top:229px" width="30" height="12"><path d="M0 0v11l7-5.5zM11 0v11l7-5.5zM18 0v11l7-5.5z" fill="#d0d0d0"/></svg>
<div class="t" style="left:1016.0px;width:20px;text-align:right;top:250px;color:#e08a7a;font-size:13px">1</div>
<div class="t" style="left:1037.5px;width:20px;text-align:right;top:250px;color:#e0e0e0;font-size:13px">2</div>
<div class="t" style="left:1059.0px;width:20px;text-align:right;top:250px;color:#e0e0e0;font-size:13px">3</div>
<div class="t" style="left:1080.5px;width:20px;text-align:right;top:250px;color:#e0e0e0;font-size:13px">4</div>
<div class="t" style="left:1102.0px;width:20px;text-align:right;top:250px;color:#e0e0e0;font-size:13px">5</div>
<div class="t" style="left:1123.5px;width:20px;text-align:right;top:250px;color:#e0e0e0;font-size:13px">6</div>
<div class="t" style="left:1145.0px;width:20px;text-align:right;top:250px;color:#dcdcdc;font-size:13px">7</div>
<div class="t" style="left:1016.0px;width:20px;text-align:right;top:266px;color:#e08a7a;font-size:13px">8</div>
<div class="t" style="left:1037.5px;width:20px;text-align:right;top:266px;color:#e0e0e0;font-size:13px">9</div>
<div class="t" style="left:1059.0px;width:20px;text-align:right;top:266px;color:#e0e0e0;font-size:13px">10</div>
<div class="t" style="left:1080.5px;width:20px;text-align:right;top:266px;color:#e0e0e0;font-size:13px">11</div>
<div class="t" style="left:1102.0px;width:20px;text-align:right;top:266px;color:#e0e0e0;font-size:13px">12</div>
<div class="t" style="left:1123.5px;width:20px;text-align:right;top:266px;color:#e0e0e0;font-size:13px">13</div>
<div class="t" style="left:1145.0px;width:20px;text-align:right;top:266px;color:#dcdcdc;font-size:13px">14</div>
<div class="t" style="left:1016.0px;width:20px;text-align:right;top:282px;color:#e08a7a;font-size:13px">15</div>
<div class="t" style="left:1037.5px;width:20px;text-align:right;top:282px;color:#e0e0e0;font-size:13px">16</div>
<div class="t" style="left:1059.0px;width:20px;text-align:right;top:282px;color:#e0e0e0;font-size:13px">17</div>
<div class="t" style="left:1080.5px;width:20px;text-align:right;top:282px;color:#e0e0e0;font-size:13px">18</div>
<div class="t" style="left:1102.0px;width:20px;text-align:right;top:282px;color:#e0e0e0;font-size:13px">19</div>
<div class="t" style="left:1123.5px;width:20px;text-align:right;top:282px;color:#e0e0e0;font-size:13px">20</div>
<div class="t" style="left:1145.0px;width:20px;text-align:right;top:282px;color:#dcdcdc;font-size:13px">21</div>
<div class="t" style="left:1016.0px;width:20px;text-align:right;top:298px;color:#e08a7a;font-size:13px">22</div>
<div class="t" style="left:1037.5px;width:20px;text-align:right;top:298px;color:#e0e0e0;font-size:13px">23</div>
<div class="t" style="left:1059.0px;width:20px;text-align:right;top:298px;color:#e0e0e0;font-size:13px">24</div>
<div class="t" style="left:1080.5px;width:20px;text-align:right;top:298px;color:#e0e0e0;font-size:13px">25</div>
<div class="t" style="left:1102.0px;width:20px;text-align:right;top:298px;color:#e0e0e0;font-size:13px">26</div>
<div class="t" style="left:1123.5px;width:20px;text-align:right;top:298px;color:#e0e0e0;font-size:13px">27</div>
<div class="t" style="left:1145.0px;width:20px;text-align:right;top:298px;color:#dcdcdc;font-size:13px">28</div>
<div class="t" style="left:1016.0px;width:20px;text-align:right;top:314px;color:#e08a7a;font-size:13px">29</div>
<div class="t" style="left:1037.5px;width:20px;text-align:right;top:314px;color:#e0e0e0;font-size:13px">30</div>
<div class="t" style="left:1059.0px;width:20px;text-align:right;top:314px;color:#e0e0e0;font-size:13px">31</div>
<div class="t" style="left:1080.5px;width:20px;text-align:right;top:314px;color:#7c7c7c;font-size:13px">1</div>
<div class="t" style="left:1102.0px;width:20px;text-align:right;top:314px;color:#7c7c7c;font-size:13px">2</div>
<div class="t" style="left:1123.5px;width:20px;text-align:right;top:314px;color:#7c7c7c;font-size:13px">3</div>
<div class="t" style="left:1145.0px;width:20px;text-align:right;top:314px;color:#7c7c7c;font-size:13px">4</div>
<div class="t" style="left:1016.0px;width:20px;text-align:right;top:330px;color:#7c7c7c;font-size:13px">5</div>
<div class="t" style="left:1037.5px;width:20px;text-align:right;top:330px;color:#7c7c7c;font-size:13px">6</div>
<div class="t" style="left:1059.0px;width:20px;text-align:right;top:330px;color:#7c7c7c;font-size:13px">7</div>
<div class="t" style="left:1080.5px;width:20px;text-align:right;top:330px;color:#7c7c7c;font-size:13px">8</div>
<div class="t" style="left:1102.0px;width:20px;text-align:right;top:330px;color:#7c7c7c;font-size:13px">9</div>
<div class="t" style="left:1123.5px;width:20px;text-align:right;top:330px;color:#7c7c7c;font-size:13px">10</div>
<div class="t" style="left:1145.0px;width:20px;text-align:right;top:330px;color:#7c7c7c;font-size:13px">11</div>

<div class="a" style="left:1008px;top:361px;width:122px;height:16px;background:#575757;border:1px solid #000"></div>
<div class="t" style="left:1086px;top:377px;color:#d8d8d8;text-decoration:underline;--w:26px;transform:scaleX(1.1130);transform-origin:0 0;">8:59</div>
<div class="btn" style="left:1146px;top:367px;width:44px;height:23px;line-height:21px"><span style="--w:30.7px;transform:scaleX(0.9025);transform-origin:0 0;">詳細...</span></div>
<div class="a" style="left:1008px;top:398px;width:183px;height:16px;background:linear-gradient(90deg,#5a5a5a,#4a4a4a 30%,#444 55%,#4a4a4a 70%,#555);border:1px solid #000"></div>
<div class="t" style="left:1062px;top:400px;color:#e8e8e8;--w:66px;transform:scaleX(1.1000);transform-origin:0 0;">出･南中･没</div>
<div class="t" style="left:1059px;top:416px;color:#dcdcdc;--w:80px;transform:scaleX(0.9524);transform-origin:0 0;">出没時刻を表示</div>
<div class="t" style="left:1012px;top:436px;color:#dcdcdc">太陽</div><div class="t" style="left:1070px;top:436px;color:#dcdcdc;font-size:12px;letter-spacing:-0.5px;--w:24.5px;transform:scaleX(0.8899);transform-origin:0 0;">06:45</div><div class="t" style="left:1112px;top:436px;color:#dcdcdc;font-size:12px;letter-spacing:-0.5px;--w:24.5px;transform:scaleX(0.9196);transform-origin:0 0;">11:33</div><div class="t" style="left:1154px;top:436px;color:#dcdcdc;font-size:12px;letter-spacing:-0.5px;--w:24.5px;transform:scaleX(0.8899);transform-origin:0 0;">16:28</div>
<div class="t" style="left:1012px;top:452px;color:#dcdcdc">月</div><div class="t" style="left:1070px;top:452px;color:#dcdcdc;font-size:12px;letter-spacing:-0.5px;--w:24.5px;transform:scaleX(0.8899);transform-origin:0 0;">12:12</div><div class="t" style="left:1112px;top:452px;color:#dcdcdc;font-size:12px;letter-spacing:-0.5px;--w:24.5px;transform:scaleX(0.8899);transform-origin:0 0;">17:31</div><div class="t" style="left:1154px;top:452px;color:#dcdcdc;font-size:12px;letter-spacing:-0.5px;--w:24.5px;transform:scaleX(0.8899);transform-origin:0 0;">23:21</div>
<div class="t" style="left:1012px;top:468px;color:#dcdcdc">水星</div><div class="t" style="left:1070px;top:468px;color:#dcdcdc;font-size:12px;letter-spacing:-0.5px;--w:24.5px;transform:scaleX(0.8899);transform-origin:0 0;">06:16</div><div class="t" style="left:1112px;top:468px;color:#dcdcdc;font-size:12px;letter-spacing:-0.5px;--w:24.5px;transform:scaleX(0.9196);transform-origin:0 0;">11:14</div><div class="t" style="left:1154px;top:468px;color:#dcdcdc;font-size:12px;letter-spacing:-0.5px;--w:24.5px;transform:scaleX(0.8899);transform-origin:0 0;">16:14</div>
<div class="t" style="left:1012px;top:484px;color:#dcdcdc">金星</div><div class="t" style="left:1070px;top:484px;color:#dcdcdc;font-size:12px;letter-spacing:-0.5px;--w:24.5px;transform:scaleX(0.8899);transform-origin:0 0;">09:51</div><div class="t" style="left:1112px;top:484px;color:#dcdcdc;font-size:12px;letter-spacing:-0.5px;--w:24.5px;transform:scaleX(0.8899);transform-origin:0 0;">14:47</div><div class="t" style="left:1154px;top:484px;color:#dcdcdc;font-size:12px;letter-spacing:-0.5px;--w:24.5px;transform:scaleX(0.8899);transform-origin:0 0;">19:42</div>
<div class="t" style="left:1012px;top:500px;color:#dcdcdc">火星</div><div class="t" style="left:1070px;top:500px;color:#dcdcdc;font-size:12px;letter-spacing:-0.5px;--w:24.5px;transform:scaleX(0.8899);transform-origin:0 0;">19:58</div><div class="t" style="left:1112px;top:500px;color:#dcdcdc;font-size:12px;letter-spacing:-0.5px;--w:24.5px;transform:scaleX(0.8899);transform-origin:0 0;">03:10</div><div class="t" style="left:1154px;top:500px;color:#dcdcdc;font-size:12px;letter-spacing:-0.5px;--w:24.5px;transform:scaleX(0.8899);transform-origin:0 0;">10:18</div>
<div class="t" style="left:1012px;top:516px;color:#dcdcdc">木星</div><div class="t" style="left:1070px;top:516px;color:#dcdcdc;font-size:12px;letter-spacing:-0.5px;--w:24.5px;transform:scaleX(0.8899);transform-origin:0 0;">16:20</div><div class="t" style="left:1112px;top:516px;color:#dcdcdc;font-size:12px;letter-spacing:-0.5px;--w:24.5px;transform:scaleX(0.8899);transform-origin:0 0;">23:30</div><div class="t" style="left:1154px;top:516px;color:#dcdcdc;font-size:12px;letter-spacing:-0.5px;--w:24.5px;transform:scaleX(0.8899);transform-origin:0 0;">06:44</div>
<div class="t" style="left:1012px;top:532px;color:#dcdcdc">土星</div><div class="t" style="left:1070px;top:532px;color:#dcdcdc;font-size:12px;letter-spacing:-0.5px;--w:24.5px;transform:scaleX(0.9196);transform-origin:0 0;">11:54</div><div class="t" style="left:1112px;top:532px;color:#dcdcdc;font-size:12px;letter-spacing:-0.5px;--w:24.5px;transform:scaleX(0.8899);transform-origin:0 0;">17:32</div><div class="t" style="left:1154px;top:532px;color:#dcdcdc;font-size:12px;letter-spacing:-0.5px;--w:24.5px;transform:scaleX(0.8899);transform-origin:0 0;">23:09</div>
<div class="t" style="left:1012px;top:548px;color:#dcdcdc">天王星</div><div class="t" style="left:1070px;top:548px;color:#dcdcdc;font-size:12px;letter-spacing:-0.5px;--w:24.5px;transform:scaleX(0.8899);transform-origin:0 0;">15:00</div><div class="t" style="left:1112px;top:548px;color:#dcdcdc;font-size:12px;letter-spacing:-0.5px;--w:24.5px;transform:scaleX(0.8899);transform-origin:0 0;">21:58</div><div class="t" style="left:1154px;top:548px;color:#dcdcdc;font-size:12px;letter-spacing:-0.5px;--w:24.5px;transform:scaleX(0.8899);transform-origin:0 0;">05:00</div>
<div class="t" style="left:1012px;top:564px;color:#dcdcdc">海王星</div><div class="t" style="left:1070px;top:564px;color:#dcdcdc;font-size:12px;letter-spacing:-0.5px;--w:24.5px;transform:scaleX(0.8899);transform-origin:0 0;">12:27</div><div class="t" style="left:1112px;top:564px;color:#dcdcdc;font-size:12px;letter-spacing:-0.5px;--w:24.5px;transform:scaleX(0.8899);transform-origin:0 0;">18:22</div><div class="t" style="left:1154px;top:564px;color:#dcdcdc;font-size:12px;letter-spacing:-0.5px;--w:24.5px;transform:scaleX(0.8899);transform-origin:0 0;">00:21</div>

<div class="a" style="left:1008px;top:593px;width:183px;height:16px;background:linear-gradient(90deg,#5a5a5a,#4a4a4a 30%,#343434 55%,#3a3a3a 70%,#575757);border:1px solid #000"></div>
<div class="t" style="left:1066px;top:596px;color:#e8e8e8;--w:65px;transform:scaleX(0.9848);transform-origin:0 0;">暦･天文現象</div>
<div class="a" style="left:1008px;top:612px;width:185px;height:152px;overflow:hidden">
<div class="t" style="left:4.5px;top:4px;color:#dcdcdc;--w:107.5px;transform:scaleX(0.9556);transform-origin:0 0;">旧暦 2024年11月 8日</div>
<div class="t" style="left:5.0px;top:16px;color:#dcdcdc;--w:41.6px;transform:scaleX(0.9451);transform-origin:0 0;">月齢 6.9</div>
<div class="a" style="left:6px;top:42px;width:9px;height:9px;background:#d0d0d0"></div>
<div class="t" style="left:17.0px;top:40px;color:#dcdcdc;--w:47.6px;transform:scaleX(0.9388);transform-origin:0 0;">05時59分</div>
<div class="t" style="left:13.0px;top:52px;color:#dcdcdc;--w:45px;transform:scaleX(0.9375);transform-origin:0 0;">火星が留</div>
<div class="a" style="left:6px;top:66px;width:9px;height:9px;background:#d0d0d0"></div>
<div class="t" style="left:17.0px;top:64px;color:#dcdcdc;--w:47.6px;transform:scaleX(0.9388);transform-origin:0 0;">07時24分</div>
<div class="t" style="left:13.0px;top:76px;color:#dcdcdc;--w:45px;transform:scaleX(0.9375);transform-origin:0 0;">木星が衝</div>
<div class="a" style="left:6px;top:89px;width:9px;height:9px;background:#d0d0d0"></div>
<div class="t" style="left:17.0px;top:87px;color:#dcdcdc;--w:47.6px;transform:scaleX(0.9388);transform-origin:0 0;">09時45分</div>
<div class="t" style="left:13.0px;top:100px;color:#dcdcdc;--w:57px;transform:scaleX(0.9500);transform-origin:0 0;">土星が東矩</div>
<div class="a" style="left:6px;top:113px;width:9px;height:9px;background:#d0d0d0"></div>
<div class="t" style="left:17.0px;top:111px;color:#dcdcdc;--w:47.6px;transform:scaleX(0.9388);transform-origin:0 0;">18時12分</div>
<div class="t" style="left:13.0px;top:124px;color:#dcdcdc;--w:117px;transform:scaleX(0.9683);transform-origin:0 0;">月が土星の南0.3°  通過</div>
<div class="a" style="left:6px;top:137px;width:9px;height:9px;background:#d0d0d0"></div>
<div class="t" style="left:17.0px;top:135px;color:#dcdcdc;--w:35px;transform:scaleX(0.9722);transform-origin:0 0;">土星食</div>
<div class="t" style="left:13.0px;top:147px;color:#dcdcdc;--w:110px;transform:scaleX(1.0781);transform-origin:0 0;">19時19分 潜入接触</div>
</div>
<!-- bottom bars -->
<div class="a" style="left:996px;top:764px;width:203px;height:21px;background:#0b0b0b"></div>
<div class="a" style="left:996px;top:785px;width:203px;height:3px;background:#555"></div>
<div class="a" style="left:996px;top:788px;width:203px;height:20px;background:linear-gradient(90deg,#3b5189,#2d3f6c 60%,#1d2948)"></div>
<div class="a" style="left:996px;top:808px;width:203px;height:3px;background:#555"></div>
<div class="a" style="left:996px;top:811px;width:203px;height:20px;background:linear-gradient(90deg,#3b5189,#2d3f6c 60%,#1d2948)"></div>
<div class="a" style="left:996px;top:831px;width:203px;height:3px;background:#555"></div>
<div class="a" style="left:996px;top:834px;width:203px;height:20px;background:linear-gradient(90deg,#3b5189,#2d3f6c 60%,#1d2948)"></div>
<div class="a" style="left:996px;top:854px;width:203px;height:3px;background:#555"></div>
<div class="a" style="left:996px;top:857px;width:203px;height:20px;background:linear-gradient(90deg,#3b5189,#2d3f6c 60%,#1d2948)"></div>
<div class="a" style="left:996px;top:877px;width:203px;height:1px;background:#555"></div>
<div class="t" style="left:1021px;top:768px;color:#e8e4d8;font-weight:bold;-webkit-text-stroke:0.2px currentColor;font-size:12.5px;--w:49px;transform:scaleX(0.9423);transform-origin:0 0;">今日の暦</div>
<div class="t" style="left:1021px;top:791px;color:#ccd0dc;font-weight:bold;-webkit-text-stroke:0.2px currentColor;font-size:12.5px;--w:81px;transform:scaleX(0.8901);transform-origin:0 0;">天文現象ガイド</div>
<div class="t" style="left:1021px;top:814px;color:#ccd0dc;font-weight:bold;-webkit-text-stroke:0.2px currentColor;font-size:12.5px;--w:50.4px;transform:scaleX(0.9692);transform-origin:0 0;">更新情報</div>
<div class="t" style="left:1021px;top:837px;color:#ccd0dc;font-weight:bold;-webkit-text-stroke:0.2px currentColor;font-size:12.5px;--w:62.6px;transform:scaleX(0.8026);transform-origin:0 0;">新着ニュース</div>
<div class="t" style="left:1021px;top:860px;color:#ccd0dc;font-weight:bold;-webkit-text-stroke:0.2px currentColor;font-size:12.5px;--w:96.75px;transform:scaleX(0.7442);transform-origin:0 0;">カスタムコントロール</div>
<svg class="a" style="left:1000px;top:768px" width="16" height="14"><path d="M4 1h12l-4 12H0z" fill="#7080c0"/><path d="M5 2h10l-3 9H2z" fill="#c0c8f0"/><text x="5.5" y="10" font-size="8" font-weight="bold" fill="#334" font-family="Liberation Sans">7</text></svg>
<svg class="a" style="left:1000px;top:790px" width="17" height="17"><circle cx="6.5" cy="6.5" r="6" fill="#b8c0e8"/><rect x="8" y="8" width="8" height="8" fill="#8090d0"/><path d="M9 10h6M9 12h6M9 14h6M11 9v6M13 9v6" stroke="#3a4a80" stroke-width=".7"/></svg>
<svg class="a" style="left:1000px;top:814px" width="16" height="14"><path d="M1 9a7 7 0 0 1 12-4" stroke="#b8c0e8" stroke-width="2.5" fill="none"/><path d="M10 5l5-4" stroke="#b8c0e8" stroke-width="1.5"/><rect x="1" y="10" width="14" height="4" fill="#8898d8"/></svg>
<svg class="a" style="left:1000px;top:836px" width="16" height="17"><circle cx="8" cy="7.5" r="7" fill="#b8c0e8"/><path d="M6 13l1 4 2-3z" fill="#b8c0e8"/><rect x="7" y="6" width="2.2" height="6" fill="#334a88"/><circle cx="8.1" cy="3.8" r="1.2" fill="#334a88"/></svg>
<svg class="a" style="left:1000px;top:860px" width="17" height="15"><rect x="1" y="1" width="14" height="3" fill="none" stroke="#b8c0e8"/><rect x="1" y="6" width="14" height="3" fill="none" stroke="#b8c0e8"/><rect x="1" y="11" width="9" height="3" fill="none" stroke="#b8c0e8"/><circle cx="13" cy="12" r="2.8" fill="none" stroke="#b8c0e8" stroke-width="1.6" stroke-dasharray="1.4 .9"/></svg>
<!-- STATUS -->
<div class="t" style="left:3px;top:882px;color:#d8d8d8;font-size:12px;--w:207px;transform:scaleX(0.8107);transform-origin:0 0;">ヘルプを表示するには [F1] を押してください。</div>
<div class="a" style="left:836px;top:882px;width:240px;height:17px;border-top:1px solid #111;border-left:1px solid #111;border-right:1px solid #5a5a5a;background:#242424"></div>
<div class="t" style="left:839px;top:884px;color:#dcdcdc;font-size:12px;--w:131px;transform:scaleX(1.0262);transform-origin:0 0;">方位: 282.3°  高度:  54.7°</div>
<svg class="a" style="left:1185px;top:884px" width="14" height="14"><path d="M1 13L13 1M5 13L13 5M9 13L13 9" stroke="#aaa" stroke-width="1.2" stroke-dasharray="1.5 1"/></svg>

<!-- DIALOG -->
<div class="a" style="left:681px;top:100px;width:419px;height:406px;background:#2a2a2a;border:1px solid #1c86e0"></div>
<div class="a" style="left:681px;top:100px;width:419px;height:31px;background:#0078d7"></div>
<div class="t" style="left:691px;top:110px;color:#fff;font-size:12px">視野円</div>
<svg class="a" style="left:1078px;top:109px" width="12" height="12"><path d="M1 1L11 11M11 1L1 11" stroke="#fff" stroke-width="1.2"/></svg>
<div class="cb" style="left:696px;top:147px"></div>
<svg class="a" style="left:698px;top:149px" width="9" height="8"><path d="M1 4l2.5 2.5L8 1" stroke="#ccc" stroke-width="1.4" fill="none"/></svg>
<div class="t dt" style="left:712px;top:147px;--w:39px;transform:scaleX(0.9746);transform-origin:0 0;">表示(<u>V</u>)</div>
<div class="inp" style="left:780px;top:143px;width:52px;height:18px"></div>
<div class="t dt" style="left:784px;top:146px;color:#f0f0f0;--w:19px;transform:scaleX(0.8134);transform-origin:0 0;">0.50</div>
<div class="spin" style="left:834px;top:143px"><i></i><b></b></div>
<div class="t dt" style="left:854px;top:147px">度</div>
<div class="t dt" style="left:886px;top:147px;--w:90px;transform:scaleX(0.9851);transform-origin:0 0;">視野円の固定(<u>K</u>):</div>
<div class="a" style="left:992px;top:143px;width:95px;height:20px;background:#202020;border:1px solid #000;box-shadow:inset 0 0 0 1px #777"></div>
<div class="t dt" style="left:996px;top:147px;--w:41.7px;transform:scaleX(0.6950);transform-origin:0 0;">スクリーン</div>
<div class="a" style="left:1068px;top:145px;width:16px;height:16px;background:linear-gradient(#3a3a3a,#111);border:1px solid #000;box-shadow:inset 0 0 0 1px #555"></div>
<svg class="a" style="left:1072px;top:151px" width="8" height="5"><path d="M0 0h8L4 4.5z" fill="#e8e8e8"/></svg>
<!-- group 光学系 -->
<div class="a" style="left:694px;top:175px;width:392px;height:121px;border:1px solid #777;box-shadow:0 0 0 1px #111, inset 0 0 0 1px #111"></div>
<div class="a" style="left:700px;top:169px;width:62px;height:12px;background:#2a2a2a"></div>
<div class="t dt" style="left:702px;top:169px;--w:56.4px;transform:scaleX(0.9949);transform-origin:0 0;">光学系(<u>O</u>):</div>
<div class="t dt" style="left:707px;top:195px;--w:98px;transform:scaleX(0.9865);transform-origin:0 0;">望遠鏡の焦点距離:</div>
<div class="t dt" style="left:707px;top:227px;--w:107.6px;transform:scaleX(0.8724);transform-origin:0 0;">アイピースの焦点距離:</div>
<div class="t dt" style="left:707px;top:258px;--w:115.8px;transform:scaleX(0.8556);transform-origin:0 0;">アイピースの見かけ視野:</div>
<div class="inp" style="left:838px;top:192px;width:52px;height:19px"></div>
<div class="inp" style="left:838px;top:224px;width:52px;height:19px"></div>
<div class="inp" style="left:838px;top:255px;width:52px;height:19px"></div>
<div class="t dt" style="left:843px;top:195px;color:#f0f0f0;--w:21.7px;transform:scaleX(0.8126);transform-origin:0 0;">1000</div>
<div class="t dt" style="left:843px;top:227px;color:#f0f0f0;--w:10px;transform:scaleX(0.7485);transform-origin:0 0;">10</div>
<div class="t dt" style="left:843px;top:258px;color:#f0f0f0;--w:10px;transform:scaleX(0.7485);transform-origin:0 0;">50</div>
<div class="spin" style="left:892px;top:192px"><i></i><b></b></div>
<div class="spin" style="left:892px;top:224px"><i></i><b></b></div>
<div class="spin" style="left:892px;top:255px"><i></i><b></b></div>
<div class="t dt" style="left:911px;top:198px;font-size:11px;letter-spacing:1px">mm</div>
<div class="t dt" style="left:911px;top:230px;font-size:11px;letter-spacing:1px">mm</div>
<div class="t dt" style="left:911px;top:259px">度</div>
<!-- 計算結果 -->
<div class="a" style="left:941px;top:191px;width:131px;height:92px;border:1px solid #777;box-shadow:0 0 0 1px #111, inset 0 0 0 1px #111"></div>
<div class="a" style="left:944px;top:185px;width:54px;height:12px;background:#2a2a2a"></div>
<div class="t dt" style="left:945px;top:186px;--w:51.8px;transform:scaleX(1.0089);transform-origin:0 0;">計算結果:</div>
<div class="t dt" style="left:962px;top:206px;--w:28px;transform:scaleX(1.0240);transform-origin:0 0;">倍率:</div>
<div class="t dt" style="left:950px;top:230px;--w:40px;transform:scaleX(1.0167);transform-origin:0 0;">視野角:</div>
<div class="a" style="left:1001px;top:203px;width:42px;height:18px;border:1px solid #666;box-shadow:inset 0 0 0 1px #1a1a1a"></div>
<div class="a" style="left:1001px;top:227px;width:42px;height:18px;border:1px solid #666;box-shadow:inset 0 0 0 1px #1a1a1a"></div>
<div class="t dt" style="left:1013px;top:206px;--w:15.7px;transform:scaleX(0.7838);transform-origin:0 0;">100</div>
<div class="t dt" style="left:1011px;top:230px;--w:18.6px;transform:scaleX(0.7963);transform-origin:0 0;">0.50</div>
<div class="t dt" style="left:1047px;top:206px">倍</div>
<div class="t dt" style="left:1047px;top:230px">度</div>
<div class="btn" style="left:960px;top:253px;width:95px;height:21px"><span style="--w:38px;transform:scaleX(0.9496);transform-origin:0 0;">適用(<u>P</u>)</span></div>
<div class="a" style="left:686px;top:162px;width:250px;height:120px;border:3px solid #f7c300;border-radius:11px"></div>
<!-- favorites -->
<div class="t dt" style="left:696px;top:308px;--w:69.75px;transform:scaleX(0.8864);transform-origin:0 0;">お気に入り(<u>F</u>):</div>
<div class="cb" style="left:779px;top:309px"></div>
<div class="t dt" style="left:795px;top:308px;--w:193px;transform:scaleX(0.9278);transform-origin:0 0;">表示位置を上記の視野円に連動する(<u>S</u>)</div>
<div class="a" style="left:694px;top:328px;width:294px;height:134px;background:#222;border:1px solid #7a7a7a;box-shadow:inset 0 0 0 1px #111"></div>
<div class="cb" style="left:698px;top:333px"></div>
<div class="t dt" style="left:716px;top:333px;--w:78.8px;transform:scaleX(0.7931);transform-origin:0 0;">0.50度-スクリーン</div>
<div class="btn" style="left:1000px;top:329px;width:87px;height:20px"><span style="--w:46px;transform:scaleX(0.9197);transform-origin:0 0;">追加(<u>A</u>)...</span></div>
<div class="btn dis" style="left:1000px;top:356px;width:87px;height:20px"><span style="--w:46px;transform:scaleX(0.9197);transform-origin:0 0;">編集(<u>E</u>)...</span></div>
<div class="btn dis" style="left:1000px;top:383px;width:87px;height:20px"><span style="--w:46px;transform:scaleX(0.9078);transform-origin:0 0;">削除(<u>D</u>)...</span></div>
<div class="btn" style="left:1000px;top:417px;width:87px;height:20px"><span style="--w:69px;transform:scaleX(0.7961);transform-origin:0 0;">すべてオン(<u>U</u>)...</span></div>
<div class="btn dis" style="left:1000px;top:443px;width:87px;height:20px"><span style="--w:69px;transform:scaleX(0.7961);transform-origin:0 0;">すべてオフ(<u>D</u>)...</span></div>
<div class="btn" style="left:694px;top:473px;width:88px;height:21px"><span style="--w:69px;transform:scaleX(0.9240);transform-origin:0 0;">色の設定(<u>C</u>)...</span></div>
<div class="btn" style="left:814px;top:473px;width:87px;height:21px"><span style="--w:30px;transform:scaleX(0.8333);transform-origin:0 0;">閉じる</span></div>
<div class="btn" style="left:907px;top:473px;width:86px;height:21px"><span style="--w:47px;transform:scaleX(0.7833);transform-origin:0 0;">キャンセル</span></div>
<div class="btn" style="left:1000px;top:473px;width:87px;height:21px"><span style="--w:45px;transform:scaleX(0.8543);transform-origin:0 0;">ヘルプ(<u>H</u>)</span></div>

<div class="a" id="bl"></div><div class="a" style="left:0;top:69px;width:1px;height:79px;background:#1e1e1e"></div><div class="a" id="br"></div><div class="a" id="bb"></div>
<script>
(function(){try{var els=document.querySelectorAll('[style*="--w:"]');for(var i=0;i<els.length;i++){var e=els[i];var w=parseFloat(getComputedStyle(e).getPropertyValue('--w'));if(!w)continue;var o=e.style.transform;e.style.transform='none';var r=document.createRange();r.selectNodeContents(e);var n=r.getBoundingClientRect().width;if(n>0){e.style.transform='scaleX('+(w/n).toFixed(4)+')';}else{e.style.transform=o;}}}catch(x){}})();
</script>
</body></html>
